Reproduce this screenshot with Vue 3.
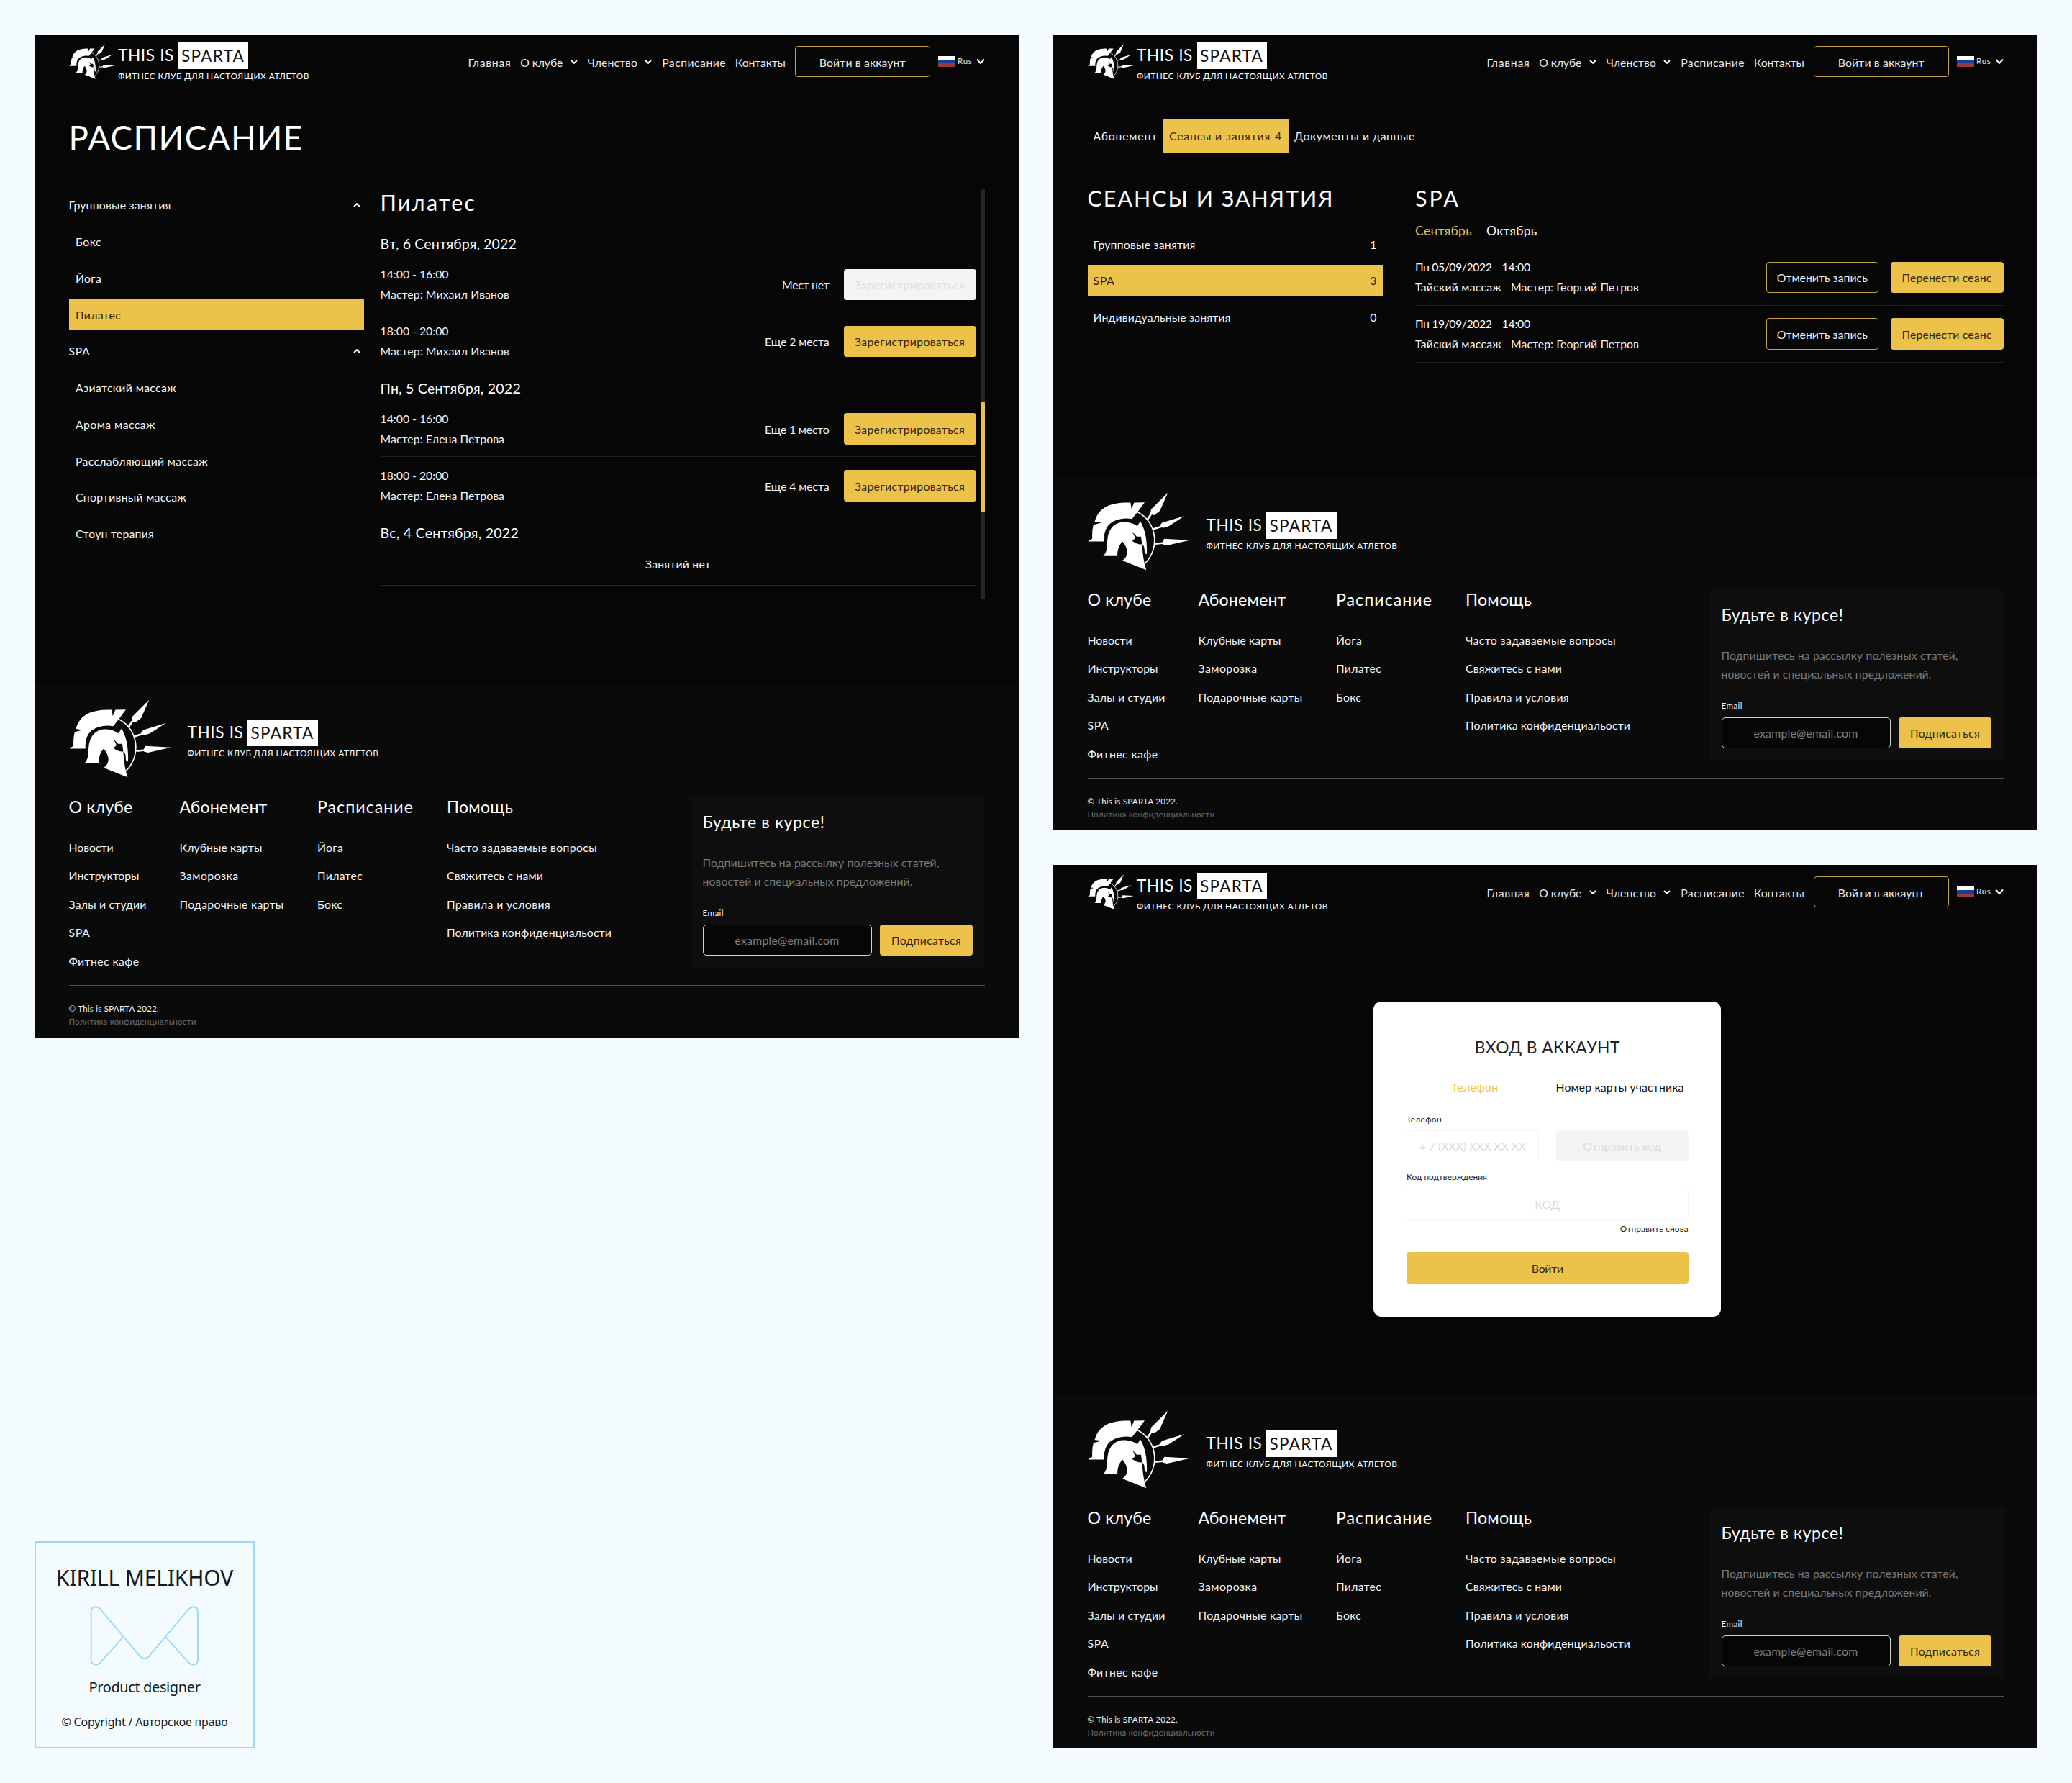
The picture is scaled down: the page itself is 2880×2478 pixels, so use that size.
<script setup>
// Spreads letters so that a label takes the given width in pixels.
const vFit = {
  mounted(el, { value }) {
    if (!value) return
    const range = document.createRange()
    range.selectNodeContents(el)
    const natural = range.getBoundingClientRect().width
    const count = el.textContent.trim().length
    el.style.letterSpacing = `${(value - natural) / count}px`
  },
}

const boards = ['schedule', 'sessions', 'login']

const nav = [
  { label: 'Главная', w: 60 },
  { label: 'О клубе', w: 59, menu: true },
  { label: 'Членство', w: 69.5, menu: true },
  { label: 'Расписание', w: 89 },
  { label: 'Контакты', w: 70 },
]

const menu = [
  { label: 'Групповые занятия', w: 142, group: true },
  { label: 'Бокс', w: 36 },
  { label: 'Йога', w: 36 },
  { label: 'Пилатес', w: 63, active: true },
  { label: 'SPA', w: 30, group: true },
  { label: 'Азиатский массаж', w: 140 },
  { label: 'Арома массаж', w: 111 },
  { label: 'Расслабляющий массаж', w: 184 },
  { label: 'Спортивный массаж', w: 154 },
  { label: 'Стоун терапия', w: 109 },
]

const days = [
  {
    date: 'Вт, 6 Сентября, 2022', w: 189.5,
    rows: [
      { time: '14:00 - 16:00', coach: 'Мастер: Михаил Иванов', cw: 179.5, left: 'Мест нет', lw: 65.5, off: true },
      { time: '18:00 - 20:00', coach: 'Мастер: Михаил Иванов', cw: 179.5, left: 'Еще 2 места', lw: 89.5 },
    ],
  },
  {
    date: 'Пн, 5 Сентября, 2022', w: 195.5,
    rows: [
      { time: '14:00 - 16:00', coach: 'Мастер: Елена Петрова', cw: 172.5, left: 'Еще 1 место', lw: 89.5 },
      { time: '18:00 - 20:00', coach: 'Мастер: Елена Петрова', cw: 172.5, left: 'Еще 4 места', lw: 89.5 },
    ],
  },
  { date: 'Вс, 4 Сентября, 2022', w: 192.5, rows: [] },
]

const sections = [
  { label: 'Групповые занятия', w: 142, count: 1 },
  { label: 'SPA', w: 30, count: 3, active: true },
  { label: 'Индивидуальные занятия', w: 191, count: 0 },
]

const visits = ['Пн 05/09/2022', 'Пн 19/09/2022']

const columns = [
  { title: 'О клубе', w: 89, links: [['Новости', 62], ['Инструкторы', 98], ['Залы и студии', 108], ['SPA', 30], ['Фитнес кафе', 98]] },
  { title: 'Абонемент', w: 122, links: [['Клубные карты', 115], ['Заморозка', 82], ['Подарочные карты', 145]] },
  { title: 'Расписание', w: 134, links: [['Йога', 36], ['Пилатес', 63], ['Бокс', 35]] },
  { title: 'Помощь', w: 92, links: [['Часто задаваемые вопросы', 209], ['Свяжитесь с нами', 134], ['Правила и условия', 144], ['Политика конфиденциальости', 229]] },
]
</script>

<template>
  <div class="page">
    <svg class="defs" width="0" height="0">
      <symbol id="helmet" viewBox="20 20 426 328">
        <path fill="#fff" d="M22 226 L22 223 L38 215 Q36 180 43 156 L76 148 L48 143 Q60 95 108 75 Q146 61 198 64 L202 90 L213 64 L257 63 L232 97 L204 132 Q150 124 114 150 Q84 174 88 226 Z" />
        <path fill="#fff" d="M84 287 C104 268 98 240 102 214 C107 168 136 145 170 145 C195 145 212 152 226 162 L239 142 C262 180 268 230 266 280 L257 274 C257 255 255 242 246 238 C249 270 250 300 264 346 L164 306 Q188 290 183 262 Q178 240 164 226 Q142 250 143 287 Z" />
        <path fill="#080808" d="M206 186 L224 206 L242 206 L246 238 Q226 240 205 224 L218 212 Z" />
        <path fill="none" stroke="#fff" stroke-width="5" d="M226 102 C312 145 322 262 254 322" />
        <path fill="none" stroke="#fff" stroke-width="8" d="M268 136 L288 106 M292 175 L328 164 M300 236 L340 232" />
        <path fill="#fff" d="M354 22 L321 98 L297 116 L281 112 L284 92 Z M424 119 L358 162 L334 170 L320 160 L330 148 Z M446 221 L350 243 L332 238 L332 226 L340 215 Z" />
      </symbol>
    </svg>

    <div class="col left">
      <section v-for="b in boards.slice(0, 1)" :key="b" class="board board-a">
        <header class="header">
          <svg class="mark-s"><use href="#helmet" /></svg>
          <div class="brand">
            <div class="brand-row"><span v-fit="78">THIS IS</span><b><span v-fit="88">SPARTA</span></b></div>
            <div class="brand-sub"><span v-fit="266">ФИТНЕС КЛУБ ДЛЯ НАСТОЯЩИХ АТЛЕТОВ</span></div>
          </div>
          <nav class="nav">
            <a v-for="n in nav" :key="n.label"><span v-fit="n.w">{{ n.label }}</span><svg v-if="n.menu" class="chev" viewBox="0 0 10 6"><path d="M1 1 L5 4.8 L9 1" /></svg></a>
          </nav>
          <div class="login"><span v-fit="120">Войти в аккаунт</span></div>
          <i class="flag"></i><span v-fit="20.5" class="lang">Rus</span>
          <svg class="chev big" viewBox="0 0 12 9"><path d="M1 1.5 L6 7 L11 1.5" /></svg>
        </header>
        <div class="body">
          <h1><span v-fit="326">РАСПИСАНИЕ</span></h1>
          <div class="split">
            <ul class="side">
              <li v-for="m in menu" :key="m.label" :class="{ active: m.active, group: m.group }">
                <span v-fit="m.w">{{ m.label }}</span>
                <svg v-if="m.group" class="chev up" viewBox="0 0 10 6"><path d="M1 5 L5 1.2 L9 5" /></svg>
              </li>
            </ul>
            <div class="list">
              <h2><span v-fit="134">Пилатес</span></h2>
              <div v-for="d in days" :key="d.date" class="day">
                <h3><span v-fit="d.w">{{ d.date }}</span></h3>
                <div v-for="r in d.rows" :key="r.time" class="row">
                  <div class="info">
                    <p><span v-fit="95">{{ r.time }}</span></p>
                    <p><span v-fit="r.cw">{{ r.coach }}</span></p>
                  </div>
                  <span v-fit="r.lw" class="places">{{ r.left }}</span>
                  <div class="btn reg" :class="{ off: r.off }"><span v-fit="153">Зарегистрироваться</span></div>
                </div>
                <div v-if="!d.rows.length" class="none"><span v-fit="91">Занятий нет</span></div>
              </div>
            </div>
            <div class="scroll"><i></i></div>
          </div>
        </div>
        <footer class="footer">
          <div class="fbrand">
            <svg class="mark-l"><use href="#helmet" /></svg>
            <div class="brand">
              <div class="brand-row"><span v-fit="78">THIS IS</span><b><span v-fit="88">SPARTA</span></b></div>
              <div class="brand-sub"><span v-fit="266">ФИТНЕС КЛУБ ДЛЯ НАСТОЯЩИХ АТЛЕТОВ</span></div>
            </div>
          </div>
          <div class="fcols">
            <div v-for="c in columns" :key="c.title">
              <h4><span v-fit="c.w">{{ c.title }}</span></h4>
              <p v-for="l in c.links" :key="l[0]" class="link"><span v-fit="l[1]">{{ l[0] }}</span></p>
            </div>
            <div class="news">
              <h4><span v-fit="170">Будьте в курсе!</span></h4>
              <div class="lead"><p><span v-fit="329">Подпишитесь на рассылку полезных статей,</span></p><p><span v-fit="292">новостей и специальных предложений.</span></p></div>
              <div class="lbl"><span v-fit="29.5">Email</span></div>
              <div class="form"><div class="input"><span v-fit="145">example@email.com</span></div><div class="btn"><span v-fit="97">Подписаться</span></div></div>
            </div>
          </div>
          <div class="legal"><p><span v-fit="125.5">© This is SPARTA 2022.</span></p><p class="dim"><span v-fit="177">Политика конфиденциальности</span></p></div>
        </footer>
      </section>

      <aside class="sign">
        <div class="sign-name"><span v-fit="246">KIRILL MELIKHOV</span></div>
        <svg class="sign-mark" viewBox="256 304 455 252"><path d="M395 436 L299 543 C285 559 261 552 261 532 L261 330 C261 309 285 305 299 320 L466 518 C475 529 492 529 501 518 L668 320 C682 305 706 309 706 330 L706 532 C706 552 682 559 668 543 L572 436" /></svg>
        <div class="sign-role"><span v-fit="155">Product designer</span></div>
        <div class="sign-copy"><span v-fit="231">© Copyright / Авторское право</span></div>
      </aside>
    </div>

    <div class="col right">
      <section v-for="b in boards.slice(1)" :key="b" class="board" :class="b">
        <header class="header">
          <svg class="mark-s"><use href="#helmet" /></svg>
          <div class="brand">
            <div class="brand-row"><span v-fit="78">THIS IS</span><b><span v-fit="88">SPARTA</span></b></div>
            <div class="brand-sub"><span v-fit="266">ФИТНЕС КЛУБ ДЛЯ НАСТОЯЩИХ АТЛЕТОВ</span></div>
          </div>
          <nav class="nav">
            <a v-for="n in nav" :key="n.label"><span v-fit="n.w">{{ n.label }}</span><svg v-if="n.menu" class="chev" viewBox="0 0 10 6"><path d="M1 1 L5 4.8 L9 1" /></svg></a>
          </nav>
          <div class="login"><span v-fit="120">Войти в аккаунт</span></div>
          <i class="flag"></i><span v-fit="20.5" class="lang">Rus</span>
          <svg class="chev big" viewBox="0 0 12 9"><path d="M1 1.5 L6 7 L11 1.5" /></svg>
        </header>

        <div v-if="b === 'sessions'" class="body">
          <div class="tabs">
            <div><span v-fit="89.5">Абонемент</span></div>
            <div class="active"><span v-fit="141">Сеансы и занятия</span><span class="num">4</span></div>
            <div><span v-fit="168">Документы и данные</span></div>
          </div>
          <div class="split">
            <div class="side">
              <h2><span v-fit="343">СЕАНСЫ И ЗАНЯТИЯ</span></h2>
              <ul class="counts">
                <li v-for="s in sections" :key="s.label" :class="{ active: s.active }"><span v-fit="s.w">{{ s.label }}</span><span>{{ s.count }}</span></li>
              </ul>
            </div>
            <div class="visits">
              <h2><span v-fit="63">SPA</span></h2>
              <div class="months"><span v-fit="79" class="on">Сентябрь</span><span v-fit="70.5">Октябрь</span></div>
              <div v-for="v in visits" :key="v" class="row">
                <div class="info">
                  <p class="strong"><span v-fit="106.5">{{ v }}</span><span v-fit="39.5" class="t">14:00</span></p>
                  <p><span v-fit="120">Тайский массаж</span><span v-fit="178" class="m">Мастер: Георгий Петров</span></p>
                </div>
                <div class="btn line"><span v-fit="126">Отменить запись</span></div>
                <div class="btn move"><span v-fit="125">Перенести сеанс</span></div>
              </div>
            </div>
          </div>
        </div>

        <div v-else class="body">
          <div class="card">
            <div class="card-title"><span v-fit="202">ВХОД В АККАУНТ</span></div>
            <div class="card-tabs"><div class="on"><span v-fit="65">Телефон</span></div><div><span v-fit="178">Номер карты участника</span></div></div>
            <div class="card-lbl first"><span v-fit="49">Телефон</span></div>
            <div class="pair"><div class="field"><span v-fit="148">+ 7 (XXX) XXX XX XX</span></div><div class="send"><span v-fit="109">Отправить код</span></div></div>
            <div class="card-lbl second"><span v-fit="112">Код подтверждения</span></div>
            <div class="field"><span v-fit="35">КОД</span></div>
            <div class="again"><span v-fit="95">Отправить снова</span></div>
            <div class="btn enter"><span v-fit="44">Войти</span></div>
          </div>
        </div>

        <footer class="footer">
          <div class="fbrand">
            <svg class="mark-l"><use href="#helmet" /></svg>
            <div class="brand">
              <div class="brand-row"><span v-fit="78">THIS IS</span><b><span v-fit="88">SPARTA</span></b></div>
              <div class="brand-sub"><span v-fit="266">ФИТНЕС КЛУБ ДЛЯ НАСТОЯЩИХ АТЛЕТОВ</span></div>
            </div>
          </div>
          <div class="fcols">
            <div v-for="c in columns" :key="c.title">
              <h4><span v-fit="c.w">{{ c.title }}</span></h4>
              <p v-for="l in c.links" :key="l[0]" class="link"><span v-fit="l[1]">{{ l[0] }}</span></p>
            </div>
            <div class="news">
              <h4><span v-fit="170">Будьте в курсе!</span></h4>
              <div class="lead"><p><span v-fit="329">Подпишитесь на рассылку полезных статей,</span></p><p><span v-fit="292">новостей и специальных предложений.</span></p></div>
              <div class="lbl"><span v-fit="29.5">Email</span></div>
              <div class="form"><div class="input"><span v-fit="145">example@email.com</span></div><div class="btn"><span v-fit="97">Подписаться</span></div></div>
            </div>
          </div>
          <div class="legal"><p><span v-fit="125.5">© This is SPARTA 2022.</span></p><p class="dim"><span v-fit="177">Политика конфиденциальности</span></p></div>
        </footer>
      </section>
    </div>
  </div>
</template>

<style>
body { margin: 0; background: #f3fbff; }
</style>

<style scoped>
* { box-sizing: border-box; }
h1, h2, h3, h4, p, ul { margin: 0; padding: 0; font-weight: 400; }
ul { list-style: none; }
.page {
  display: flex; gap: 48px; width: 2880px; height: 2478px; padding: 48px;
  background: #f3fbff; font-family: Lato, "Noto Sans", sans-serif; font-size: 15.8px; line-height: 19px; white-space: nowrap;
}
.defs { position: absolute; }
.col { display: flex; flex-direction: column; width: 1368px; }
.left { justify-content: space-between; }
.right { gap: 48px; }
.board { display: flex; flex-direction: column; background: #060606; color: #f4f4f4; }
.board-a { height: 1394px; }
.sessions { height: 1106px; }
.login.board { height: 1228px; }
.body { flex: 1; padding: 0 47.5px; }

.header { display: flex; align-items: center; height: 75px; padding: 0 47.5px; color: #e8e8e8; }
.mark-s { width: 64px; height: 49px; margin-top: -1px; }
.brand { color: #fff; }
.mark-s + .brand { margin-left: 4.5px; }
.brand-row { display: flex; align-items: center; gap: 5.5px; font-size: 22.6px; height: 37px; line-height: 37.5px; }
.brand-row b { width: 97.5px; height: 37px; padding-left: 4.5px; background: #fff; color: #111; font-weight: 400; }
.brand-sub { margin-top: 2px; font-size: 11.9px; line-height: 15px; }
.nav { display: flex; align-items: center; margin-left: auto; padding-top: 1px; }
.nav a { display: flex; align-items: center; margin-right: 12.7px; }
.chev { width: 10px; height: 6px; fill: none; stroke: #fff; stroke-width: 2; }
.nav .chev { margin: 0 1px 0 10.5px; }
.header .chev.big { width: 12px; height: 9px; margin-left: 5px; }
.header .login { display: flex; align-items: center; justify-content: center; width: 188.5px; height: 43.5px; padding-top: 1px; border: 1px solid #c4a541; border-radius: 4px; }
.flag { width: 23.5px; height: 15.5px; margin-left: 11px; background: linear-gradient(#fff 36%, #17409a 36% 66%, #9a3b3a 66%); }
.lang { margin: -3px 0 0 3.5px; font-size: 11.6px; }

h1 { margin-top: 40px; font-size: 45.6px; line-height: 55px; color: #fff; }
h2 { font-size: 30.4px; line-height: 37px; color: #fff; }
h3 { font-size: 19.6px; line-height: 24px; color: #fff; }
.board-a .split { margin-top: 44.5px; }
.split { display: flex; }
.side { width: 410px; }
.side li { display: flex; align-items: center; justify-content: space-between; height: 43.4px; margin-bottom: 7.4px; padding: 1px 5px 0 9.5px; line-height: 43px; }
.side li.group { padding-left: 0; }
.side li.active { background: #ecc24a; color: #2a1f08; }
.list { width: 828px; margin-left: 23px; }
.day { padding-top: 27.5px; }
.day + .day { padding-top: 14.8px; }
.row { display: flex; align-items: center; height: 79px; padding-top: 2.5px; border-bottom: 1px solid #1c1c1c; }
h3 + .row, h3 + .none { margin-top: 4px; }
.day .row:last-child { border-color: transparent; }
.info { margin-right: auto; line-height: 28.2px; }
.btn { display: flex; align-items: center; justify-content: center; height: 43.5px; padding-top: 1px; border-radius: 4px; background: #ecc24a; color: #33270c; }
.reg { width: 184px; margin-left: 20px; }
.reg.off { background: #f4f4f4; color: #e0e0e0; }
.none { height: 57.5px; padding-top: 17.5px; text-align: center; border-bottom: 1px solid #262626; }
.scroll { width: 4.5px; height: 570px; margin-left: 7.5px; padding-top: 296.5px; background: #262626; border-radius: 2px; }
.scroll i { display: block; height: 152px; background: #ecc24a; }

.tabs { display: flex; height: 47px; margin-top: 42.5px; border-bottom: 1px solid #ecc24a; }
.tabs div { display: flex; align-items: center; padding: 0 8px; }
.tabs .active { width: 174px; background: #ecc24a; color: #33270c; }
.num { margin-left: 6px; }
.sessions .split { margin-top: 44px; }
.counts { margin-top: 23.5px; }
.counts li { padding: 1px 8px 0; }
.visits { flex: 1; margin-left: 45.5px; }
.months { display: flex; gap: 20px; margin: 16px 0 15px; font-size: 17.6px; line-height: 22px; color: #fff; }
.months .on { color: #ecc24a; }
.visits .row { height: 78.7px; padding-top: 0; }
.strong { color: #fff; }
.t { margin-left: 14px; }
.m { margin-left: 13px; }
.line { width: 156.5px; background: none; border: 1px solid #c4a541; color: #f0f0f0; }
.move { width: 157px; margin-left: 16.5px; }

.card { display: flex; flex-direction: column; width: 483px; height: 437.5px; margin: 115px 0 0 397.8px; padding: 48.5px 45.6px 0; border-radius: 11px; background: #fff; color: #222; }
.card-title { font-size: 22.8px; line-height: 29px; text-align: center; }
.card-tabs { display: grid; grid-template-columns: 1fr 1fr; gap: 17px; margin-top: 31.3px; padding: 0 3px; line-height: 20px; text-align: center; color: #111; }
.card-tabs .on { color: #ecc24a; }
.card-lbl, .again { font-size: 11.9px; line-height: 15px; }
.first { margin: 27px 0 8px; }
.second { margin: 14.6px 0 8.2px; }
.pair { display: grid; grid-template-columns: 1fr 1fr; gap: 23.5px; }
.field, .send { display: flex; align-items: center; justify-content: center; height: 43px; border: 1px solid #f6f6f6; border-radius: 4px; color: #dcdcdc; }
.send { background: #f4f4f4; }
.again { margin-top: 5.8px; text-align: right; }
.enter { margin-top: 25px; }

.footer { height: 491px; padding: 21px 47.5px 0; background: #0a0a0a; }
.fbrand { display: flex; align-items: center; height: 109px; }
.mark-l { width: 142px; height: 109px; margin-right: 23px; }
.fcols { display: grid; grid-template-columns: 154px 191.5px 180px 1fr 408px; height: 264px; margin-top: 26px; border-bottom: 2px solid #505050; }
h4 { font-size: 23.2px; line-height: 29px; color: #fff; }
.link { margin-top: 20.4px; }
h4 + .link { margin-top: 32px; }
.news { height: 236px; margin-top: 1px; padding: 19.7px 16.5px 0 16px; background: #0e0e0e; }
.lead { margin-top: 29.3px; line-height: 25.6px; color: #787878; }
.lbl { margin: 24.4px 0 9px; font-size: 11.6px; line-height: 14px; }
.form { display: flex; justify-content: space-between; }
.input { display: flex; align-items: center; justify-content: center; width: 235px; height: 43.5px; border: 1.3px solid #d0d0d0; border-radius: 5px; background: #060606; color: #808080; }
.form .btn { width: 129px; }
.legal { padding-top: 21.5px; font-size: 11.6px; line-height: 18px; }
.dim { color: #6c6c6c; }

.sign { display: flex; flex-direction: column; align-items: center; width: 306px; height: 288px; border: 2px solid #98daf9; color: #111a20; font-family: "Noto Sans", "Open Sans", sans-serif; }
.sign-name { margin-top: 29px; font-size: 30px; line-height: 40px; }
.sign-mark { width: 151.7px; height: 84px; margin-top: 18px; fill: none; stroke: #98daf9; stroke-width: 5.5; }
.sign-role { margin-top: 16px; font-size: 20px; line-height: 28px; }
.sign-copy { margin-top: 21.5px; font-size: 16px; line-height: 24px; }
</style>
